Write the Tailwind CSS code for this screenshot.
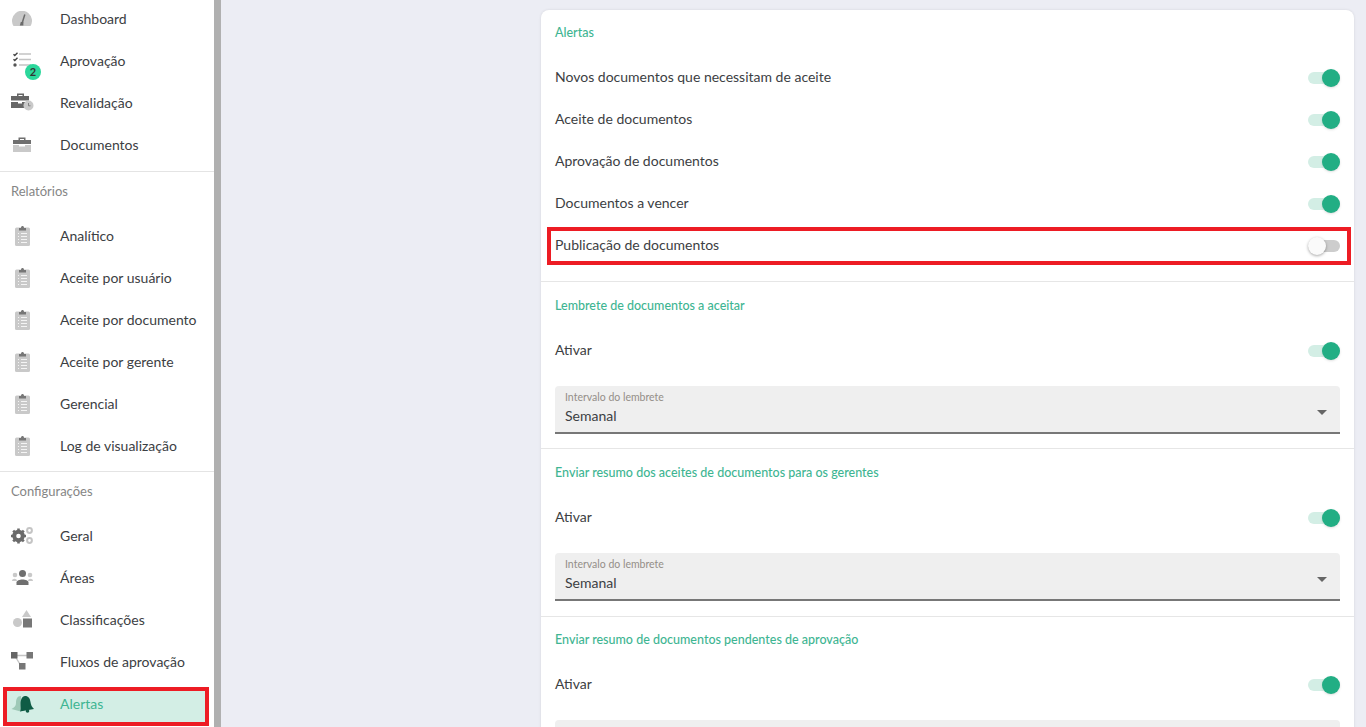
<!DOCTYPE html>
<html>
  <head>
    <meta charset="UTF-8" />
    <script src="https://cdn.jsdelivr.net/npm/@tailwindcss/browser@4"></script>
    <title>Alertas</title>
  </head>
  <body class="overflow-hidden bg-[#ecedf4] font-['Lato',sans-serif] text-[#3c4043]">
    <svg class="hidden">
      <symbol id="clip" viewBox="0 0 15 21">
        <rect x="0" y="2.500" width="15" height="18.500" rx="1.500" fill="#c9c9c9" />
        <path d="M4 5.500V3h2c0-2.600 3-2.600 3 0h2v2.500z" fill="#777" />
        <path d="M3 8.500h1M6 8.500h6M3 11.500h1M6 11.500h6M3 14.500h1M6 14.500h6M3 17.500h1M6 17.500h6" stroke="#f4f4f4" stroke-width="1" />
      </symbol>
    </svg>
    <div class="flex h-[727px] w-[1366px] overflow-hidden">
      <aside class="h-full w-[221px] shrink-0 border-r-[7px] border-[#b0b0b0] bg-white text-[14px]">
        <a class="-mt-[2px] flex h-[42px] items-center pb-[2px]">
          <span class="flex w-[60px] justify-start pl-[12px]">
            <svg width="20" height="15" viewBox="0 0 20 15"><path d="M1.500 15A10 10 0 1 1 18.500 15z" fill="#c9c9c9" /><path d="M12.800 3.500L10.200 12" stroke="#6b6b6b" stroke-width="1.500" /><path d="M7.800 14.500l1-3.500h2.600v3.500z" fill="#6b6b6b" /></svg>
          </span>
          <span>Dashboard</span>
        </a>
        <a class="relative flex h-[42px] items-center pb-[2px]">
          <span class="flex w-[60px] pl-[13px]">
            <svg width="19" height="16" viewBox="0 0 19 16"><path d="M.5 2.200l1.300 1.300L4.500.8M.5 7.200l1.300 1.300L4.500 5.800" stroke="#444" stroke-width="1.400" fill="none" /><circle cx="2" cy="13" r="1.700" fill="#555" /><path d="M6 2h12M6 7.500h12M6 13h12" stroke="#c4c4c4" stroke-width="1.600" /></svg>
          </span>
          <span>Aprovação</span>
          <span class="absolute left-[25px] top-[24px] flex h-[16px] w-[16px] items-center justify-center rounded-full bg-[#2bd79b] text-[11px] font-bold text-[#333]">2</span>
        </a>
        <a class="flex h-[42px] items-center pb-[2px]">
          <span class="flex w-[60px] pl-[11px]">
            <svg width="23" height="18" viewBox="0 0 23 18"><path d="M6 3V.5h7V3h5v4.500H0V3zM7.500 3h4V2h-4z" fill="#666" fill-rule="evenodd" /><path d="M0 9h7v1.500h4V9h6v2a5 5 0 0 0-2.500 4H0z" fill="#666" /><circle cx="17.500" cy="12.500" r="5" fill="#c9c9c9" /><path d="M17.500 10v2.800h2" stroke="#777" stroke-width=".9" fill="none" /></svg>
          </span>
          <span>Revalidação</span>
        </a>
        <a class="flex h-[42px] items-center pb-[2px]">
          <span class="flex w-[60px] pl-[13px]">
            <svg width="18" height="15" viewBox="0 0 18 15"><path d="M5.500 3V.5h7V3H18v4H0V3zM7 3h4V2H7z" fill="#6f6f6f" fill-rule="evenodd" /><path d="M0 8h6v1.500h6V8h6v7H0z" fill="#c9c9c9" /></svg>
          </span>
          <span>Documentos</span>
        </a>
        <div class="mt-[5px] border-t border-[#e4e4e4]"></div>
        <div class="flex h-[43px] items-start pl-[11px] pt-[10px] text-[13px] text-[#858585]">Relatórios</div>
        <a class="flex h-[42px] items-center pb-[2px]"><span class="flex w-[60px] pl-[15px]"><svg width="15" height="21"><use href="#clip" /></svg></span><span>Analítico</span></a>
        <a class="flex h-[42px] items-center pb-[2px]"><span class="flex w-[60px] pl-[15px]"><svg width="15" height="21"><use href="#clip" /></svg></span><span>Aceite por usuário</span></a>
        <a class="flex h-[42px] items-center pb-[2px]"><span class="flex w-[60px] pl-[15px]"><svg width="15" height="21"><use href="#clip" /></svg></span><span>Aceite por documento</span></a>
        <a class="flex h-[42px] items-center pb-[2px]"><span class="flex w-[60px] pl-[15px]"><svg width="15" height="21"><use href="#clip" /></svg></span><span>Aceite por gerente</span></a>
        <a class="flex h-[42px] items-center pb-[2px]"><span class="flex w-[60px] pl-[15px]"><svg width="15" height="21"><use href="#clip" /></svg></span><span>Gerencial</span></a>
        <a class="flex h-[42px] items-center pb-[2px]"><span class="flex w-[60px] pl-[15px]"><svg width="15" height="21"><use href="#clip" /></svg></span><span>Log de visualização</span></a>
        <div class="mt-[4px] border-t border-[#e4e4e4]"></div>
        <div class="flex h-[43px] items-start pl-[11px] pt-[10px] text-[13px] text-[#858585]">Configurações</div>
        <a class="flex h-[42px] items-center pb-[2px]">
          <span class="flex w-[60px] pl-[11px]">
            <svg width="23" height="17" viewBox="0 0 23 17"><circle cx="7.500" cy="9" r="4.500" fill="none" stroke="#6b6b6b" stroke-width="3.500" /><path d="M7.500 1.500v15M0 9h15M2.200 3.700l10.600 10.600M12.800 3.700L2.200 14.300" stroke="#6b6b6b" stroke-width="2.600" /><circle cx="7.500" cy="9" r="2.300" fill="#fff" /><circle cx="18.500" cy="3.500" r="2.400" fill="none" stroke="#c4c4c4" stroke-width="2" /><circle cx="18.500" cy="13.500" r="2.400" fill="none" stroke="#c4c4c4" stroke-width="2" /></svg>
          </span>
          <span>Geral</span>
        </a>
        <a class="flex h-[42px] items-center pb-[2px]">
          <span class="flex w-[60px] pl-[12px]">
            <svg width="21" height="15" viewBox="0 0 21 15"><circle cx="3" cy="5" r="2.300" fill="#c9c9c9" /><circle cx="18" cy="5" r="2.300" fill="#c9c9c9" /><path d="M0 11c0-3 5-3 5 0zM16 11c0-3 5-3 5 0z" fill="#c9c9c9" /><circle cx="10.500" cy="3.500" r="3.500" fill="#6f6f6f" /><path d="M4.500 15v-2.500c0-4 12-4 12 0V15z" fill="#6f6f6f" /></svg>
          </span>
          <span>Áreas</span>
        </a>
        <a class="flex h-[42px] items-center pb-[2px]">
          <span class="flex w-[60px] pl-[13px]">
            <svg width="19" height="18" viewBox="0 0 19 18"><path d="M13.500 0l4.500 7h-9z" fill="#c9c9c9" /><circle cx="4.500" cy="12.500" r="4.500" fill="#c9c9c9" /><rect x="10" y="8.500" width="9" height="9" fill="#777" /></svg>
          </span>
          <span>Classificações</span>
        </a>
        <a class="flex h-[42px] items-center pb-[2px]">
          <span class="flex w-[60px] pl-[11px]">
            <svg width="23" height="18" viewBox="0 0 23 18"><path d="M5 3.500h12M4.500 5l5 8" stroke="#c4c4c4" stroke-width="1.400" fill="none" /><rect x="0" y="0" width="6.500" height="6.500" fill="#666" /><rect x="15.500" y="0" width="6.500" height="6.500" fill="#777" /><rect x="8" y="11" width="6.500" height="6.500" fill="#777" /></svg>
          </span>
          <span>Fluxos de aprovação</span>
        </a>
        <a class="ml-[3px] mr-[5px] mt-[4px] flex h-[39px] items-center border-[4px] border-[#ed1c24] bg-[#d3eee5] pb-[6px] text-[#3eb592]">
          <span class="flex w-[53px] pl-[4px]">
            <svg width="24" height="18" viewBox="0 0 24 18"><path d="M10 1C6 1 5 4.500 5 8c0 3-1.500 4.500-4.500 6l9 2.500z" fill="#9ec9b7" /><path d="M14 1c3.500 0 5 2.500 5.500 6 .3 3 1.500 5 3.500 7l-14 2.500c1-2 .5-3.500.5-7.500 0-4 1.500-8 4.500-8z" fill="#0f5c45" /><circle cx="16.500" cy="16" r="1.800" fill="#0f5c45" /></svg>
          </span>
          <span>Alertas</span>
        </a>
      </aside>
      <main class="relative flex-1 pl-[320px] pr-[12px] pt-[10px]">
        <div class="rounded-t-[8px] bg-white text-[14px] shadow-[0_0_3px_rgba(0,0,0,0.1)]">
          <section class="border-b border-[#e6e6e6] px-[14px] pb-[15px] pt-[13px]">
            <h3 class="mb-[13px] flex h-[20px] items-center text-[12.500px] font-medium text-[#3eb592]">Alertas</h3>
            <div class="flex h-[42px] items-center justify-between pb-[2px]">
              <span>Novos documentos que necessitam de aceite</span>
              <span class="relative mt-[4px] block h-[12px] w-[32px] rounded-full bg-[#d3eee5]"><span class="absolute -top-[3px] right-0 block h-[18px] w-[18px] rounded-full bg-[#22ae84] shadow-sm"></span></span>
            </div>
            <div class="flex h-[42px] items-center justify-between pb-[2px]">
              <span>Aceite de documentos</span>
              <span class="relative mt-[4px] block h-[12px] w-[32px] rounded-full bg-[#d3eee5]"><span class="absolute -top-[3px] right-0 block h-[18px] w-[18px] rounded-full bg-[#22ae84] shadow-sm"></span></span>
            </div>
            <div class="flex h-[42px] items-center justify-between pb-[2px]">
              <span>Aprovação de documentos</span>
              <span class="relative mt-[4px] block h-[12px] w-[32px] rounded-full bg-[#d3eee5]"><span class="absolute -top-[3px] right-0 block h-[18px] w-[18px] rounded-full bg-[#22ae84] shadow-sm"></span></span>
            </div>
            <div class="flex h-[42px] items-center justify-between pb-[2px]">
              <span>Documentos a vencer</span>
              <span class="relative mt-[4px] block h-[12px] w-[32px] rounded-full bg-[#d3eee5]"><span class="absolute -top-[3px] right-0 block h-[18px] w-[18px] rounded-full bg-[#22ae84] shadow-sm"></span></span>
            </div>
            <div class="relative flex h-[42px] items-center justify-between pb-[2px]">
              <span>Publicação de documentos</span>
              <span class="relative mt-[4px] block h-[12px] w-[32px] rounded-full bg-[#cdcdcd]"><span class="absolute -top-[3px] left-0 block h-[18px] w-[18px] rounded-full bg-[#fafafa] shadow-[0_1px_3px_rgba(0,0,0,0.35)]"></span></span>
              <div class="absolute -left-[8px] -right-[11px] top-[3px] h-[38px] border-[4px] border-[#ed1c24]"></div>
            </div>
          </section>
          <section class="border-b border-[#e6e6e6] px-[14px] pb-[14px] pt-[14px]">
            <h3 class="mb-[13px] flex h-[20px] items-center text-[12.500px] font-medium text-[#3eb592]">Lembrete de documentos a aceitar</h3>
            <div class="flex h-[42px] items-center justify-between pb-[2px]">
              <span>Ativar</span>
              <span class="relative mt-[4px] block h-[12px] w-[32px] rounded-full bg-[#d3eee5]"><span class="absolute -top-[3px] right-0 block h-[18px] w-[18px] rounded-full bg-[#22ae84] shadow-sm"></span></span>
            </div>
            <div class="relative mt-[15px] h-[48px] rounded-t-[4px] border-b-2 border-[#777] bg-[#efefef] px-[10px] pt-[5px]">
              <div class="text-[10.500px] leading-[13px] text-[#948e88]">Intervalo do lembrete</div>
              <div class="mt-[2px] text-[14px] leading-[20px]">Semanal</div>
              <span class="absolute right-[13px] top-[24px] h-0 w-0 border-x-[5px] border-t-[5px] border-x-transparent border-t-[#666]"></span>
            </div>
          </section>
          <section class="border-b border-[#e6e6e6] px-[14px] pb-[15px] pt-[14px]">
            <h3 class="mb-[13px] flex h-[20px] items-center text-[12.500px] font-medium text-[#3eb592]">Enviar resumo dos aceites de documentos para os gerentes</h3>
            <div class="flex h-[42px] items-center justify-between pb-[2px]">
              <span>Ativar</span>
              <span class="relative mt-[4px] block h-[12px] w-[32px] rounded-full bg-[#d3eee5]"><span class="absolute -top-[3px] right-0 block h-[18px] w-[18px] rounded-full bg-[#22ae84] shadow-sm"></span></span>
            </div>
            <div class="relative mt-[15px] h-[48px] rounded-t-[4px] border-b-2 border-[#777] bg-[#efefef] px-[10px] pt-[5px]">
              <div class="text-[10.500px] leading-[13px] text-[#948e88]">Intervalo do lembrete</div>
              <div class="mt-[2px] text-[14px] leading-[20px]">Semanal</div>
              <span class="absolute right-[13px] top-[24px] h-0 w-0 border-x-[5px] border-t-[5px] border-x-transparent border-t-[#666]"></span>
            </div>
          </section>
          <section class="px-[14px] pt-[13px]">
            <h3 class="mb-[13px] flex h-[20px] items-center text-[12.500px] font-medium text-[#3eb592]">Enviar resumo de documentos pendentes de aprovação</h3>
            <div class="flex h-[42px] items-center justify-between pb-[2px]">
              <span>Ativar</span>
              <span class="relative mt-[4px] block h-[12px] w-[32px] rounded-full bg-[#d3eee5]"><span class="absolute -top-[3px] right-0 block h-[18px] w-[18px] rounded-full bg-[#22ae84] shadow-sm"></span></span>
            </div>
            <div class="mt-[15px] h-[48px] rounded-t-[4px] bg-[#efefef]"></div>
          </section>
        </div>
      </main>
    </div>
  </body>
</html>
